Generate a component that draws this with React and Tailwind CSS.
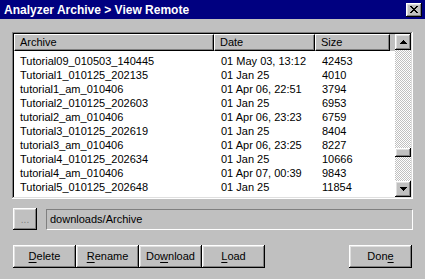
import React from "react";

const rows = [
  ["Tutorial09_010503_140445", "01 May 03, 13:12", "42453"],
  ["Tutorial1_010125_202135", "01 Jan 25", "4010"],
  ["tutorial1_am_010406", "01 Apr 06, 22:51", "3794"],
  ["Tutorial2_010125_202603", "01 Jan 25", "6953"],
  ["tutorial2_am_010406", "01 Apr 06, 23:23", "6759"],
  ["Tutorial3_010125_202619", "01 Jan 25", "8404"],
  ["tutorial3_am_010406", "01 Apr 06, 23:25", "8227"],
  ["Tutorial4_010125_202634", "01 Jan 25", "10666"],
  ["tutorial4_am_010406", "01 Apr 07, 00:39", "9843"],
  ["Tutorial5_010125_202648", "01 Jan 25", "11854"],
  ["tutorial5_am_010406", "01 Apr 07, 00:40", "10025"],
];

const raised =
  "shadow-[inset_-1px_-1px_#000,inset_1px_1px_#fff,inset_-2px_-2px_#808080,inset_2px_2px_#dfdfdf]";

function Btn({ children, className = "" }) {
  return (
    <div
      className={`h-[23px] w-[63px] bg-[#c0c0c0] flex items-center justify-center text-[11px] text-black ${raised} ${className}`}
    >
      {children}
    </div>
  );
}

function U({ children }) {
  return <span className="underline underline-offset-[2px]">{children}</span>;
}

function Arrow({ down }) {
  return (
    <svg width="7" height="4" viewBox="0 0 7 4" shapeRendering="crispEdges">
      {down ? (
        <polygon points="0,0 7,0 3.5,4" fill="#000" />
      ) : (
        <polygon points="3.5,0 7,4 0,4" fill="#000" />
      )}
    </svg>
  );
}

function CloseX() {
  const px = [
    [0, 0], [1, 0], [6, 0], [7, 0],
    [1, 1], [2, 1], [5, 1], [6, 1],
    [2, 2], [3, 2], [4, 2], [5, 2],
    [3, 3], [4, 3],
    [2, 4], [3, 4], [4, 4], [5, 4],
    [1, 5], [2, 5], [5, 5], [6, 5],
    [0, 6], [1, 6], [6, 6], [7, 6],
  ];
  return (
    <svg width="8" height="7" viewBox="0 0 8 7" shapeRendering="crispEdges">
      {px.map(([x, y], i) => (
        <rect key={i} x={x} y={y} width="1" height="1" fill="#000" />
      ))}
    </svg>
  );
}

function HeaderCell({ children, w }) {
  return (
    <div
      className={`${w} h-full bg-[#c0c0c0] border-t border-l border-white border-r border-b border-r-black border-b-black shadow-[inset_-1px_-1px_#808080] flex items-center pl-[5px] text-[11px] text-black`}
    >
      {children}
    </div>
  );
}

export default function App() {
  return (
    <div
      className="w-[425px] h-[279px] bg-[#c0c0c0] flex flex-col overflow-hidden"
      style={{ fontFamily: '"Liberation Sans", Arial, sans-serif' }}
    >
      {/* Title bar */}
      <div className="h-[19px] bg-[#000080] flex items-center justify-between pl-[4px] pr-[3px]">
        <span className="text-white font-bold text-[12px] leading-none">
          Analyzer Archive &gt; View Remote
        </span>
        <div className={`w-[16px] h-[14px] bg-[#c0c0c0] flex items-center justify-center ${raised}`}>
          <CloseX />
        </div>
      </div>

      <div className="flex flex-col px-[12px] pt-[13px]">
        {/* List box */}
        <div className="h-[167px] p-[2px] bg-white shadow-[inset_-1px_-1px_#fff,inset_1px_1px_#808080,inset_-2px_-2px_#dfdfdf,inset_2px_2px_#000] flex">
          <div className="flex-1 flex flex-col min-w-0">
            <div className="h-[17px] flex bg-[#c0c0c0] shrink-0">
              <HeaderCell w="w-[200px]">Archive</HeaderCell>
              <HeaderCell w="w-[101px]">Date</HeaderCell>
              <HeaderCell w="w-[75px]">Size</HeaderCell>
              <div className="flex-1" />
            </div>
            <div className="flex-1 bg-white overflow-hidden pt-[3px]">
              {rows.map((r, i) => (
                <div key={i} className="flex h-[14px] text-[11px] leading-[14px] text-black whitespace-nowrap">
                  <div className="w-[200px] pl-[6px]">{r[0]}</div>
                  <div className="w-[101px] pl-[7px]">{r[1]}</div>
                  <div className="w-[75px] pl-[7px]">{r[2]}</div>
                </div>
              ))}
            </div>
          </div>
          {/* Scrollbar */}
          <div className="w-[16px] flex flex-col">
            <div className={`h-[16px] bg-[#c0c0c0] flex items-center justify-center ${raised}`}>
              <Arrow />
            </div>
            <div className="flex-1 flex flex-col bg-[repeating-conic-gradient(#c0c0c0_0%_25%,#ffffff_0%_50%)] bg-[length:2px_2px]">
              <div className="h-[98px]" />
              <div className={`h-[9px] bg-[#c0c0c0] ${raised}`} />
            </div>
            <div className={`h-[16px] bg-[#c0c0c0] flex items-center justify-center ${raised}`}>
              <Arrow down />
            </div>
          </div>
        </div>

        {/* Path row */}
        <div className="flex items-center mt-[9px] h-[22px]">
          <div className={`ml-[1px] w-[24px] h-[22px] bg-[#c0c0c0] flex items-center justify-center text-[10px] text-[#808080] ${raised}`}>
            ...
          </div>
          <div className="ml-[9px] flex-1 h-[21px] border-t border-l border-[#808080] border-b border-r border-b-white border-r-white flex items-center pl-[3px] text-[11px] text-black">
            downloads/Archive
          </div>
        </div>

        {/* Buttons */}
        <div className="flex mt-[15px] pl-[1px]">
          <Btn><U>D</U>elete</Btn>
          <Btn><U>R</U>ename</Btn>
          <Btn>Do<U>w</U>nload</Btn>
          <Btn><U>L</U>oad</Btn>
          <div className="flex-1" />
          <Btn className="mr-[1px]">Don<U>e</U></Btn>
        </div>
      </div>
    </div>
  );
}
